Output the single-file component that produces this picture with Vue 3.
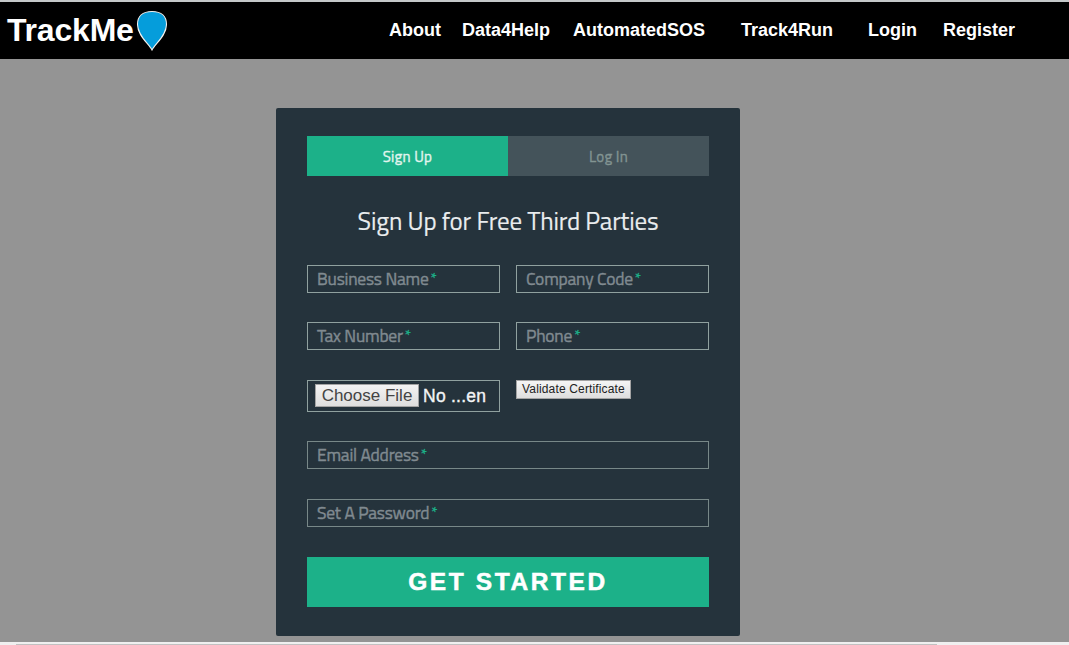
<script setup>
const links = ['About', 'Data4Help', 'AutomatedSOS', 'Track4Run', 'Login', 'Register']
const rows = [
  ['Business Name', 'Company Code'],
  ['Tax Number', 'Phone'],
]
const wide = ['Email Address', 'Set A Password']
</script>

<template>
  <div class="page">
    <header class="bar">
      <div class="brand">
        <span class="name">TrackMe</span>
        <svg class="pin" width="32" height="42" viewBox="0 0 32 42">
          <path d="M16 40 C13 34 1.500 25.500 1.500 14.500 C1.500 6.500 6.500 1.500 16 1.500 C25.500 1.500 30.500 6.500 30.500 14.500 C30.500 25.500 19 34 16 40 Z" fill="#059ddb" stroke="#f4f1ee" stroke-width="1.1" />
        </svg>
      </div>
      <nav class="links">
        <a v-for="l in links" :key="l">{{ l }}</a>
      </nav>
    </header>

    <main class="main">
      <section class="card">
        <div class="tabs">
          <div class="tab active">Sign Up</div>
          <div class="tab">Log In</div>
        </div>
        <h1 class="title">Sign Up for Free Third Parties</h1>
        <div v-for="(row, i) in rows" :key="i" class="row">
          <div v-for="f in row" :key="f" class="field">
            <span class="label">{{ f }}</span><span class="req">*</span>
          </div>
        </div>
        <div class="row files">
          <div class="field file">
            <span class="choose">Choose File</span><span class="none">No ...en</span>
          </div>
          <button class="validate">Validate Certificate</button>
        </div>
        <div v-for="f in wide" :key="f" class="field wide">
          <span class="label">{{ f }}</span><span class="req">*</span>
        </div>
        <button class="submit">GET STARTED</button>
      </section>
    </main>

    <div class="scroll"><div class="thumb"></div></div>
  </div>
</template>

<style>
body { margin: 0; overflow: hidden; }
</style>

<style scoped>
* { box-sizing: border-box; }
.page {
  width: 1069px;
  height: 645px;
  display: flex;
  flex-direction: column;
  background: #949494;
  font-family: "Titillium Web", Roboto, sans-serif;
}
.bar {
  height: 59px;
  flex: none;
  display: flex;
  background: #000;
  color: #fff;
  border-top: 2px solid #c4c8c9;
  font-family: "Liberation Sans", Arial, sans-serif;
  font-weight: bold;
}
.brand {
  width: 389px;
  padding-left: 7px;
  display: flex;
  align-items: center;
  font-size: 32px;
  line-height: 56px;
}
.name {
  width: 128px;
  height: 57px;
  letter-spacing: -0.200px;
}
.pin { margin: 1px 0 0 1px; }
.links {
  display: grid;
  grid-template-columns: 73px 111px 168px 127px 75px 80px;
  font-size: 18px;
  line-height: 56px;
}
.main {
  flex: 1;
  display: flex;
  padding: 49px 0 0 276px;
}
.card {
  width: 464px;
  height: 528px;
  padding: 28.400px 31px 0;
  background: #25333c;
  border-radius: 2px;
}
.tabs { display: flex; height: 40px; }
.tab {
  flex: 1;
  background: #44535a;
  color: #829492;
  font-size: 15px;
  line-height: 41.500px;
  text-align: center;
  letter-spacing: 0.2px;
  -webkit-text-stroke: 0.35px currentColor;
}
.tab.active { background: #1cb189; color: #e2f5ef; }
.title {
  margin: 25px 0 23.600px;
  height: 40px;
  font-size: 25px;
  font-weight: 400;
  line-height: 40px;
  text-align: center;
  white-space: nowrap;
  color: #e9ecee;
  letter-spacing: -0.18px;
  -webkit-text-stroke: 0.15px currentColor;
}
.row {
  display: grid;
  grid-template-columns: 193px 193px;
  column-gap: 16px;
  align-items: start;
  margin-bottom: 29px;
}
.row + .row.files { margin-top: 30px; }
.field {
  height: 28px;
  display: flex;
  align-items: flex-start;
  padding-left: 9px;
  border: 1px solid #90a19f;
  color: #808a90;
  font-size: 17.500px;
  line-height: 26px;
  white-space: nowrap;
}
.label {
  letter-spacing: -0.22px;
  -webkit-text-stroke: 0.4px currentColor;
}
.req {
  margin-left: 2px;
  color: #1cb189;
  font-size: 15px;
  line-height: 25px;
  -webkit-text-stroke: 0.3px currentColor;
}
.file {
  height: 32px;
  align-items: center;
  padding-left: 7px;
  font-family: "Liberation Sans", Arial, sans-serif;
  font-size: 17.500px;
}
.choose {
  width: 104px;
  height: 23px;
  border: 1px solid #a3a3a3;
  background: linear-gradient(#f3f3f3, #dedede);
  color: #444;
  font-size: 17px;
  line-height: 22px;
  text-align: center;
}
.none {
  margin-left: 4px;
  color: #f2f4f5;
  letter-spacing: 0.25px;
  -webkit-text-stroke: 0.35px currentColor;
}
.validate {
  width: 115px;
  height: 19px;
  padding: 0;
  border: 1px solid #a3a3a3;
  background: linear-gradient(#f5f5f5, #dedede);
  color: #222;
  font-family: "Liberation Sans", Arial, sans-serif;
  font-size: 12px;
  letter-spacing: 0.15px;
  line-height: 16px;
  white-space: nowrap;
}
.wide { margin-bottom: 30px; border-color: #788888; }
.submit {
  display: block;
  width: 402px;
  height: 50px;
  padding: 0;
  border: 0;
  background: #1cb189;
  color: #fff;
  font-family: "Liberation Sans", Arial, sans-serif;
  font-size: 24.500px;
  font-weight: bold;
  letter-spacing: 2.600px;
  line-height: 50px;
  -webkit-text-stroke: 0.5px currentColor;
}
.scroll {
  height: 3px;
  flex: none;
  padding: 2px 0 0 16px;
  background: #f0f0f0;
}
.thumb { width: 921px; height: 1px; background: #c1c1c1; }
</style>
